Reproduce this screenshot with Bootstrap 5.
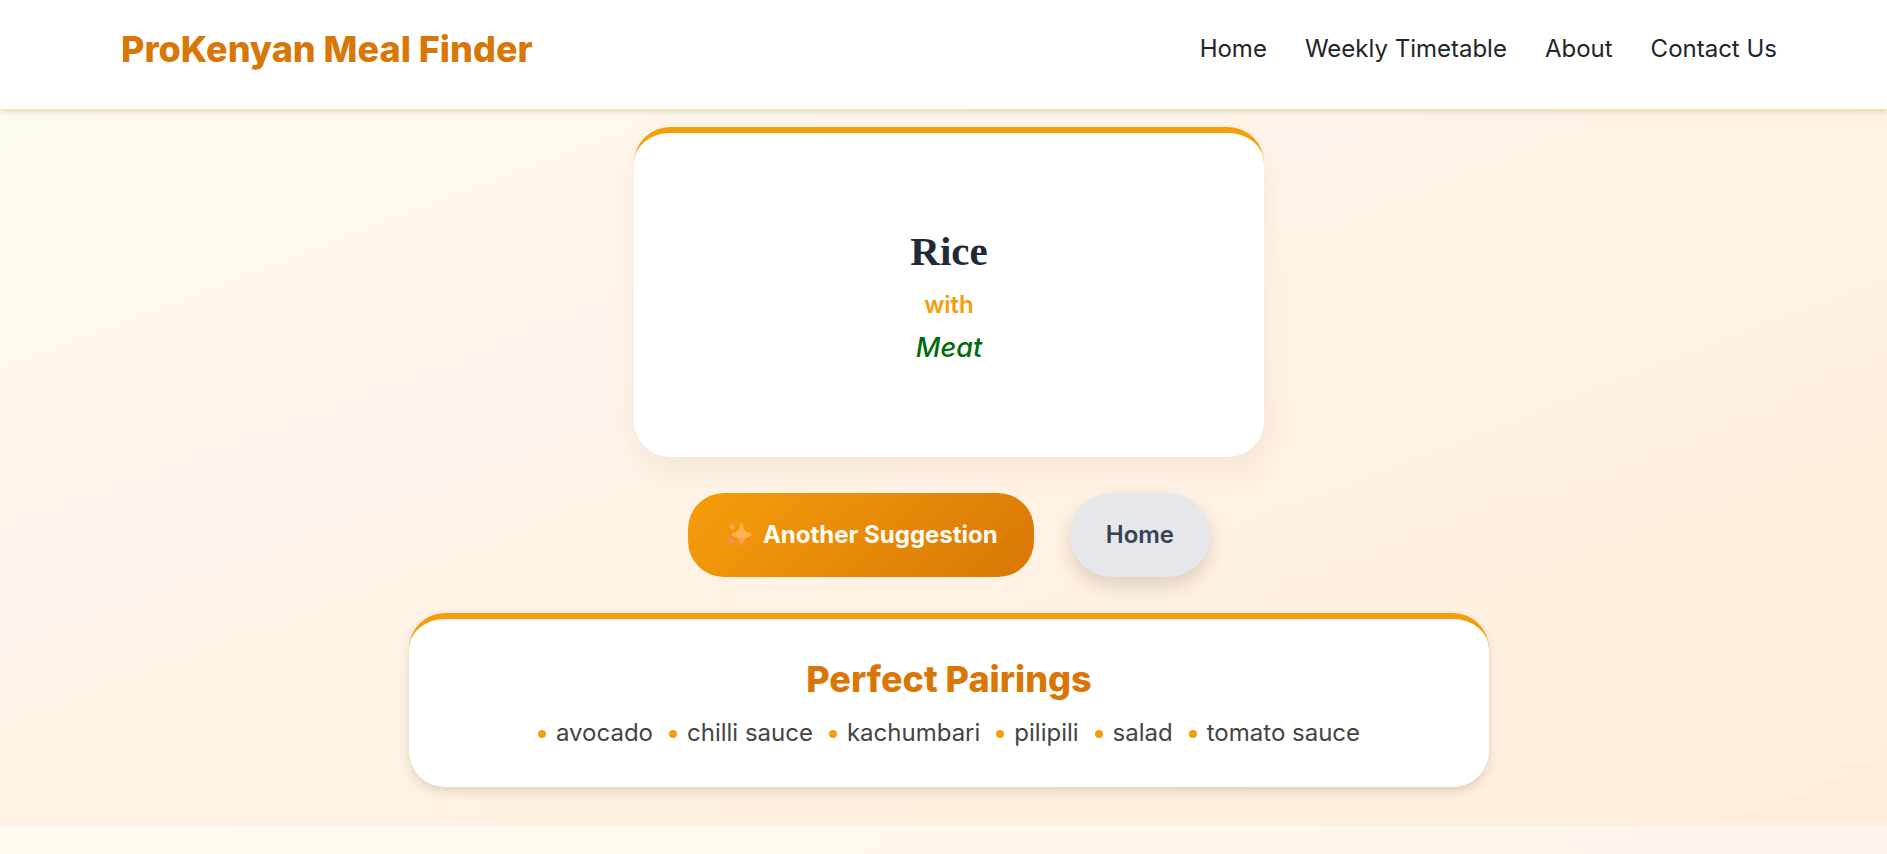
<!DOCTYPE html>
<html lang="en">
<head>
<meta charset="utf-8">
<meta name="viewport" content="width=device-width, initial-scale=1">
<title>ProKenyan Meal Finder</title>
<link rel="stylesheet" href="https://cdn.jsdelivr.net/npm/bootstrap@5.3.0/dist/css/bootstrap.min.css">
<style>
  body { font-family: Inter, "Liberation Sans", sans-serif; font-size: 24px; line-height: 36px; color: #1f2937; background: linear-gradient(90deg, #fff9f0, #fff5e8); }
  .site-header { background: #fff; border-bottom: 1px solid #fde68a; box-shadow: 0 2px 6px rgba(0,0,0,.12); padding: 24px 0 35px 11px; position: relative; }
  .site-wrap { max-width: 1728px; padding-left: 36px; padding-right: 36px; }
  .brand-name { font-size: 36px; line-height: 50px; font-weight: 800; color: #d97706; text-decoration: none; }
  .site-nav { gap: 12px 38px; }
  .site-nav a { color: #212529; text-decoration: none; }
  .meal-main { padding: 17px 0 39px 11px; gap: 36px; background: linear-gradient(to bottom right, #fffaf0 0%, #fff2e5 50%, #ffeedb 100%); }
  .panel { background: #fff; border-top: 6px solid #f59e0b; border-radius: 36px; width: 100%; }
  .meal-card { max-width: 630px; min-height: 330px; padding-top: 4px; box-shadow: 0 12px 30px rgba(120,80,40,.08); }
  .meal-name { font: bold 41px/50px "Liberation Serif", serif; color: #1f2937; margin-bottom: 11px; }
  .meal-with { color: #f59e0b; font-weight: 600; }
  .meal-side { color: #006b0b; font-size: 27px; line-height: 42px; font-weight: 500; font-style: italic; }
  .action-row { gap: 36px; }
  .action { border: 0; font-size: 24px; line-height: 36px; padding: 24px 36px; }
  .action-main { color: #fffdf5; font-weight: 700; border-radius: 36px; background: linear-gradient(135deg, #f59e0b, #d97706); gap: 11px; }
  .action-home { color: #374151; font-weight: 600; background: #e5e7eb; box-shadow: 0 9px 18px rgba(80,60,30,.18); }
  .sparkle { width: 28px; height: 28px; }
  .pairings { max-width: 1080px; padding: 36px; box-shadow: 0 5px 10px rgba(80,60,30,.16); }
  .pairings h2 { font-size: 36px; line-height: 48px; font-weight: 800; color: #d97706; }
  .pair-list { gap: 0 16px; color: #444; margin-top: 12px; }
  .pair-list li::before { content: ""; display: inline-block; width: 8px; height: 8px; border-radius: 50%; background: #f59e0b; margin-right: 10px; vertical-align: 3px; }
</style>
</head>
<body>
<header class="site-header">
  <div class="site-wrap mx-auto d-flex flex-wrap justify-content-between align-items-center">
    <a class="brand-name" href="#">ProKenyan Meal Finder</a>
    <nav class="site-nav d-flex flex-wrap">
      <a href="#">Home</a>
      <a href="#">Weekly Timetable</a>
      <a href="#">About</a>
      <a href="#">Contact Us</a>
    </nav>
  </div>
</header>
<main class="meal-main d-flex flex-column align-items-center">
  <section class="panel meal-card d-flex flex-column align-items-center justify-content-center text-center">
    <h1 class="meal-name">Rice</h1>
    <p class="meal-with mb-1">with</p>
    <p class="meal-side mb-0">Meat</p>
  </section>
  <div class="action-row d-flex flex-wrap justify-content-center">
    <button type="button" class="action action-main d-flex align-items-center">
      <svg class="sparkle" viewBox="0 0 28 28" aria-hidden="true">
        <defs>
          <linearGradient id="spark" x1="0" y1="0" x2="0" y2="1">
            <stop offset="0" stop-color="#ffb83f"/><stop offset=".5" stop-color="#ffb552"/><stop offset="1" stop-color="#fb8065"/>
          </linearGradient>
        </defs>
        <path fill="url(#spark)" d="M17.500 2.500C18.600 2.500 19 4 19.600 6.500C20.500 9.800 21.500 10.700 24.700 11.600C26.500 12.200 27.500 12.700 27.500 13.600C27.500 14.600 26.500 15.100 24.700 15.700C21.500 16.700 20.500 17.800 19.600 21.300C19 24 18.600 25.500 17.500 25.500C16.400 25.500 16 24 15.400 21.300C14.500 17.800 13.500 16.700 10.600 15.700C8.400 15.100 7.500 14.600 7.500 13.600C7.500 12.700 8.400 12.200 10.600 11.600C13.500 10.700 14.500 9.800 15.400 6.500C16 4 16.400 2.500 17.500 2.500Z"/>
        <path fill="#ffa94d" d="M8 2Q9 5 11.800 5.800Q9 6.600 8 9.600Q7 6.600 4.800 5.800Q7 5 8 2Z"/>
        <path fill="#fb8c62" d="M6.500 15.500Q7.900 19 11 20Q7.900 21 6.500 24.500Q5.100 21 2.500 20Q5.100 19 6.500 15.500Z"/>
      </svg>
      Another Suggestion
    </button>
    <button type="button" class="action action-home rounded-pill">Home</button>
  </div>
  <section class="panel pairings text-center">
    <h2 class="mb-0">Perfect Pairings</h2>
    <ul class="pair-list list-unstyled d-flex flex-wrap justify-content-center mb-0">
      <li>avocado</li>
      <li>chilli sauce</li>
      <li>kachumbari</li>
      <li>pilipili</li>
      <li>salad</li>
      <li>tomato sauce</li>
    </ul>
  </section>
</main>
<script src="https://cdn.jsdelivr.net/npm/bootstrap@5.3.0/dist/js/bootstrap.bundle.min.js"></script>
</body>
</html>
